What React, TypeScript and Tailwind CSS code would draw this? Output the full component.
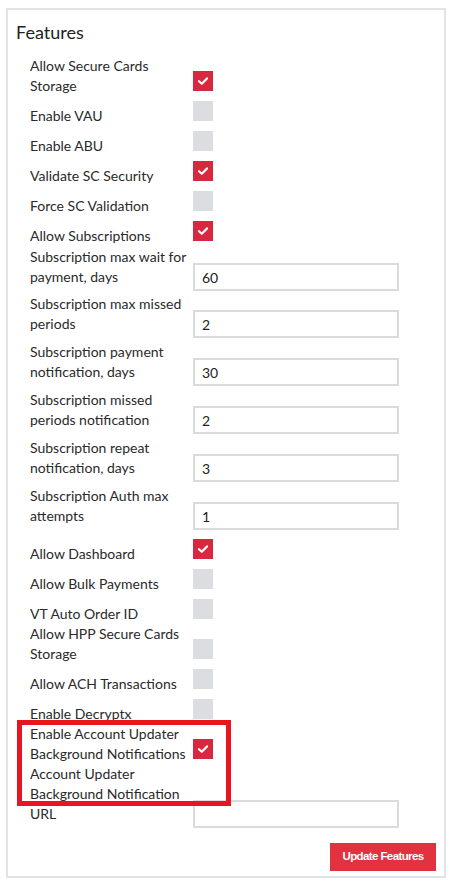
import React from "react";

type Row =
  | { kind: "check"; label: string[]; checked: boolean; mt: number }
  | { kind: "input"; label: string[]; value: string; mt: number };

const rows: Row[] = [
  { kind: "check", label: ["Allow Secure Cards", "Storage"], checked: true, mt: 0 },
  { kind: "check", label: ["Enable VAU"], checked: false, mt: 5 },
  { kind: "check", label: ["Enable ABU"], checked: false, mt: 5 },
  { kind: "check", label: ["Validate SC Security"], checked: true, mt: 5 },
  { kind: "check", label: ["Force SC Validation"], checked: false, mt: 5 },
  { kind: "check", label: ["Allow Subscriptions"], checked: true, mt: 5 },
  { kind: "input", label: ["Subscription max wait for", "payment, days"], value: "60", mt: 1 },
  { kind: "input", label: ["Subscription max missed", "periods"], value: "2", mt: 3 },
  { kind: "input", label: ["Subscription payment", "notification, days"], value: "30", mt: 4 },
  { kind: "input", label: ["Subscription missed", "periods notification"], value: "2", mt: 4 },
  { kind: "input", label: ["Subscription repeat", "notification, days"], value: "3", mt: 4 },
  { kind: "input", label: ["Subscription Auth max", "attempts"], value: "1", mt: 4 },
  { kind: "check", label: ["Allow Dashboard"], checked: true, mt: 9 },
  { kind: "check", label: ["Allow Bulk Payments"], checked: false, mt: 5 },
  { kind: "check", label: ["VT Auto Order ID"], checked: false, mt: 5 },
  { kind: "check", label: ["Allow HPP Secure Cards", "Storage"], checked: false, mt: 0 },
  { kind: "check", label: ["Allow ACH Transactions"], checked: false, mt: 5 },
  { kind: "check", label: ["Enable Decryptx"], checked: false, mt: 5 },
  { kind: "check", label: ["Enable Account Updater", "Background Notifications"], checked: true, mt: 0 },
  { kind: "input", label: ["Account Updater", "Background Notification", "URL"], value: "", mt: 0 },
];

function Checkbox({ checked }: { checked: boolean }) {
  if (!checked) return <div className="w-5 h-5 bg-[#dcdde1] mb-[5px] shrink-0" />;
  return (
    <div className="w-5 h-5 bg-[#d7283f] mb-[5px] shrink-0 flex items-center justify-center">
      <svg width="12" height="10" viewBox="0 0 12 10" fill="none">
        <path d="M2 5.2 L4.8 7.8 L10 2.4" stroke="#fff" strokeWidth="2.2" strokeLinecap="round" strokeLinejoin="round" />
      </svg>
    </div>
  );
}

export default function App() {
  return (
    <div className="relative w-[451px] h-[887px] bg-white pt-2 pl-[6px]" style={{ fontFamily: "Lato, 'Open Sans', sans-serif" }}>
      <div className="w-[440px] h-[870px] border-2 border-[#e1e4e7] px-[8px] pt-[10px]">
        <h2 className="text-[18px] leading-[24px] text-[#222]">Features</h2>

        <div className="mt-[12px] pl-[14px]">
          {rows.map((row, i) => (
            <div
              key={i}
              className={`flex ${row.kind === "check" ? "items-end" : "items-start"}`}
              style={{ marginTop: row.mt }}
            >
              <div className="w-[163px] shrink-0 text-[14px] leading-[20px] text-[#2a2a2a]">
                {row.label.map((l, j) => (
                  <div key={j} className="whitespace-nowrap">{l}</div>
                ))}
              </div>
              {row.kind === "check" ? (
                <Checkbox checked={row.checked} />
              ) : (
                <input
                  readOnly
                  value={row.value}
                  className="w-[206px] h-[28px] border-2 border-[#d9dbdd] px-[7px] text-[14px] text-[#222] outline-none"
                  style={{ marginTop: row.label.length * 20 - 24 }}
                />
              )}
            </div>
          ))}
        </div>

        <div className="flex justify-end mt-[15px]">
          <button
            className="w-[106px] h-[28px] bg-[#e2313f] text-white text-[11.5px] font-bold tracking-[-0.6px]"
            style={{ fontFamily: "'Liberation Sans', Arial, sans-serif" }}
          >
            Update Features
          </button>
        </div>
      </div>

      <div className="absolute left-[17px] top-[720px] w-[214px] h-[86px] border-[5px] border-[#e8141f]" />
    </div>
  );
}
